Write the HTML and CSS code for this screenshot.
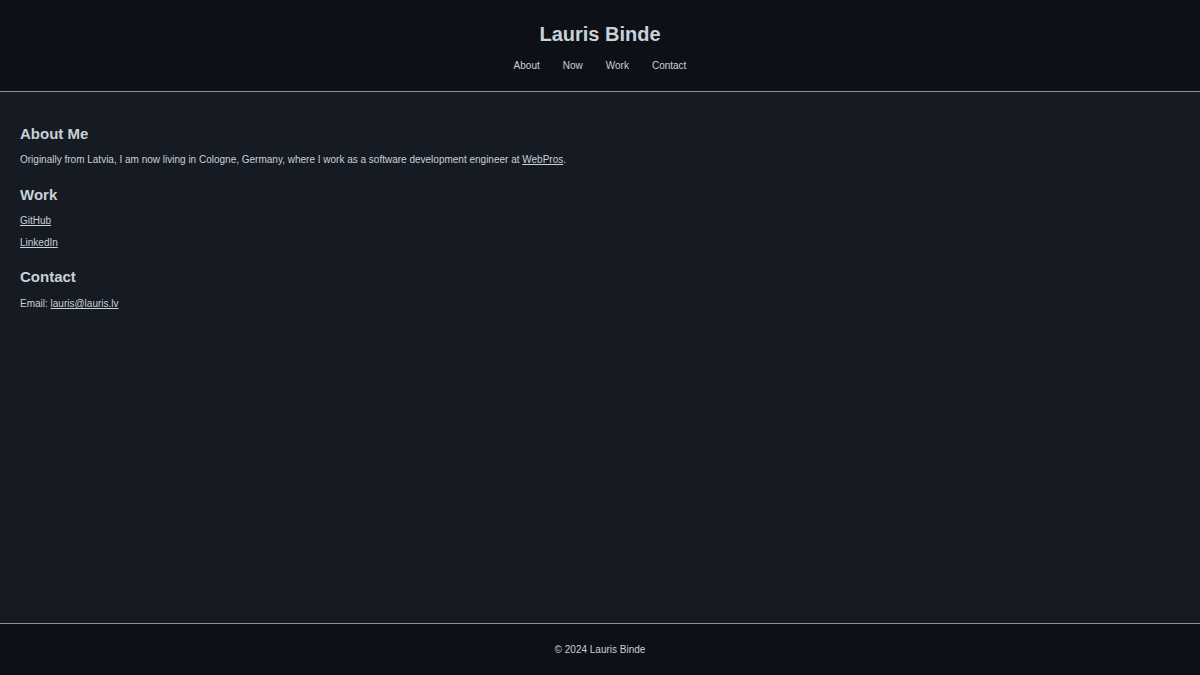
FILE: index.html
```html
<!DOCTYPE html>
<html lang="en">
<head>
<meta charset="utf-8">
<title>Lauris Binde</title>
<link rel="stylesheet" href="styles.css">
</head>
<body>
<header class="site-header">
  <h1 class="site-title">Lauris Binde</h1>
  <nav class="site-nav">
    <a href="#about">About</a>
    <a href="#now">Now</a>
    <a href="#work">Work</a>
    <a href="#contact">Contact</a>
  </nav>
</header>
<main class="content">
  <section id="about">
    <h2>About Me</h2>
    <p>Originally from Latvia, I am now living in Cologne, Germany, where I work as a software development engineer at <a href="#">WebPros</a>.</p>
  </section>
  <section id="work">
    <h2>Work</h2>
    <p><a href="#">GitHub</a></p>
    <p><a href="#">LinkedIn</a></p>
  </section>
  <section id="contact">
    <h2>Contact</h2>
    <p>Email: <a href="#">lauris@lauris.lv</a></p>
  </section>
</main>
<footer class="site-footer">
  <p>© 2024 Lauris Binde</p>
</footer>
</body>
</html>
```
FILE: styles.css
```css
* { box-sizing: border-box; }
html, body { margin: 0; padding: 0; }
body {
  min-height: 100vh;
  display: flex;
  flex-direction: column;
  background: #161b23;
  color: #c9d1d9;
  font-family: "Liberation Sans", Arial, sans-serif;
  font-size: 10px;
  line-height: 16px;
}
.site-header {
  background: #0d1017;
  border-bottom: 1px solid #8b939c;
  padding: 22px 0 17px;
  text-align: center;
}
.site-title {
  margin: 0 0 12px;
  font-size: 20px;
  line-height: 24px;
  font-weight: bold;
}
.site-nav {
  display: flex;
  justify-content: center;
  gap: 23px;
}
.site-nav a {
  color: #c9d1d9;
  text-decoration: none;
}
.content {
  flex: 1;
  padding: 16px 20px 13px;
}
.content h2 {
  margin: 17px 0 8px;
  font-size: 15px;
  line-height: 20px;
  font-weight: bold;
}
.content section:first-child h2 { margin-top: 16px; }
.content section:last-child h2 { margin: 16px 0 9px; }
.content p { margin: 6px 0; }
.content a { color: #c9d1d9; text-decoration: underline; }
.site-footer {
  background: #0d1017;
  border-top: 1px solid #8b939c;
  padding: 18px 0 17px;
  text-align: center;
}
.site-footer p { margin: 0; }
```
